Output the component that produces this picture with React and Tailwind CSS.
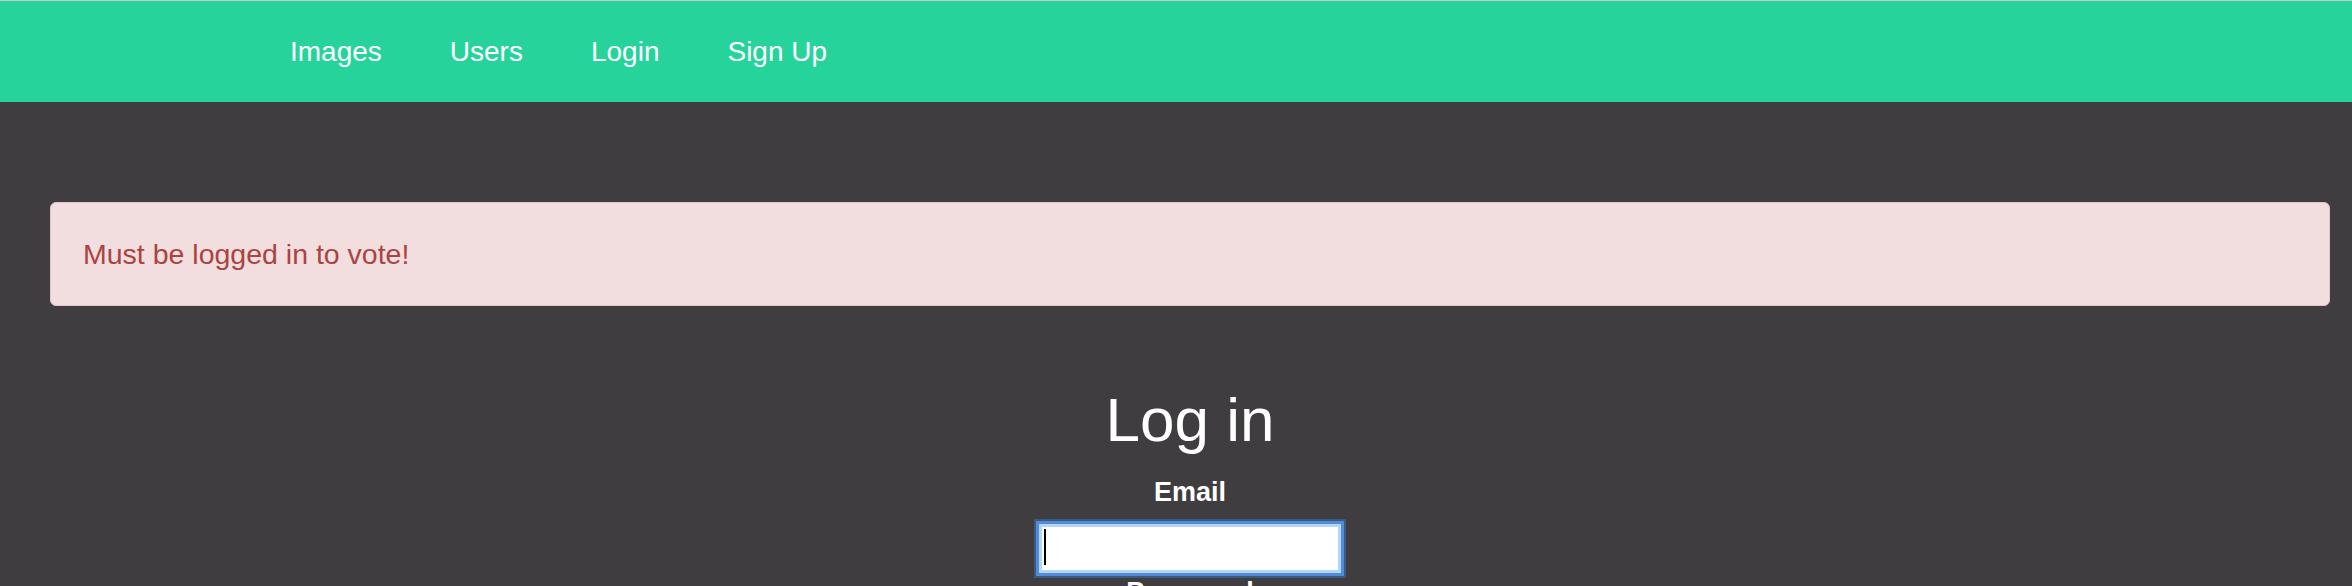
export default function App() {
  const links = ['Images', 'Users', 'Login', 'Sign Up'];

  return (
    <div className="min-h-screen bg-[#403d40] border-t border-[#c8c8c8] font-['Liberation_Sans',Arial,sans-serif]">
      {/* Top nav */}
      <nav className="h-[101px] bg-[#26d39b] flex items-center pl-[290px] gap-[68px]">
        {links.map((l) => (
          <a key={l} className="text-[28px] text-white leading-none">
            {l}
          </a>
        ))}
      </nav>

      <main className="pl-[50px] pr-[22px] pt-[100px]">
        {/* Flash message */}
        <div className="h-[104px] flex items-center px-[32px] bg-[#f2dede] border border-[#e6c3c8] rounded-[6px] text-[28.5px] text-[#a94442]">
          Must be logged in to vote!
        </div>

        {/* Login form */}
        <div className="flex flex-col items-center">
          <h1 className="mt-[83px] text-[62px] leading-none text-white">Log in</h1>
          <label className="mt-[28px] text-[27px] leading-none font-bold text-white">Email</label>
          <div className="relative mt-[18px]">
            <input
              type="email"
              className="block w-[302px] h-[49px] bg-white border-[3px] border-[#b5d5f7] outline-none shadow-[0_0_0_3px_#4f8ddb,0_0_0_5px_#3a5a82]"
            />
            <span className="absolute left-[5px] top-[5px] w-[2px] h-[36px] bg-black" />
          </div>
          <label className="mt-[6px] text-[27px] leading-none font-bold text-white">Password</label>
        </div>
      </main>
    </div>
  );
}
